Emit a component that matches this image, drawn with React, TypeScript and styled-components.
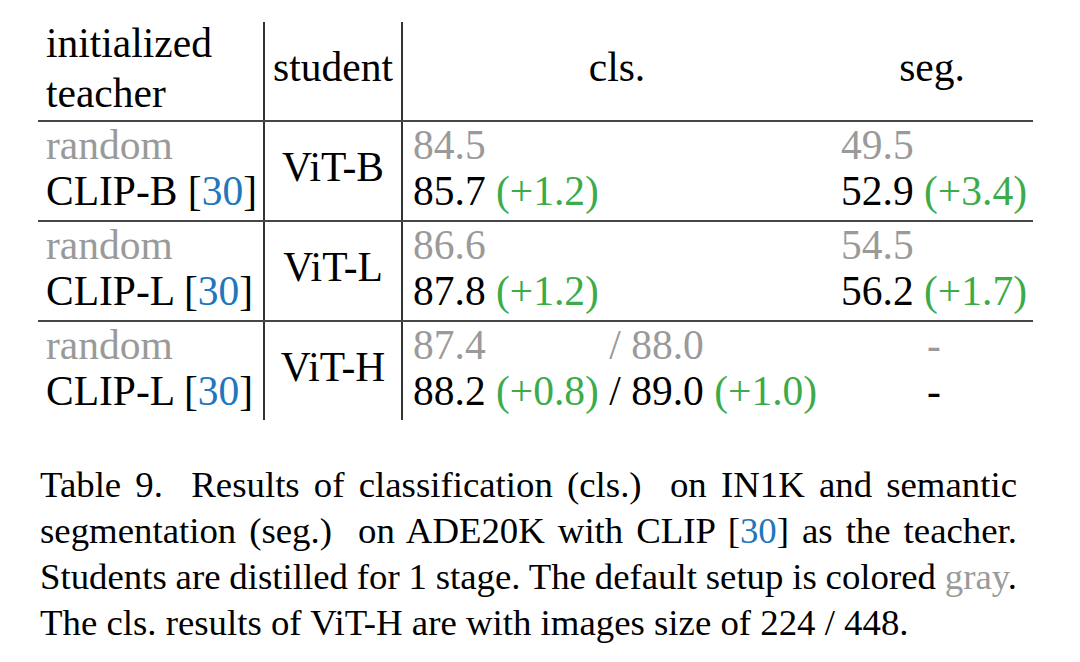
import React from "react";
import styled, { createGlobalStyle } from "styled-components";

const GlobalStyle = createGlobalStyle`
  html, body {
    margin: 0;
    padding: 0;
    background: #ffffff;
  }
  body {
    font-family: "Liberation Serif", "Times New Roman", serif;
    color: #000;
  }
`;

type Group = {
  student: string;
  teacher: string;
  clsBase: React.ReactNode;
  cls: React.ReactNode;
  segBase: React.ReactNode;
  seg: React.ReactNode;
};

const App = () => {
  const groups: Group[] = [
    {
      student: "ViT-B",
      teacher: "CLIP-B",
      clsBase: <Gray>84.5</Gray>,
      cls: <>85.7 <Gain>(+1.2)</Gain></>,
      segBase: <Gray>49.5<Phantom> (+3.4)</Phantom></Gray>,
      seg: <>52.9 <Gain>(+3.4)</Gain></>,
    },
    {
      student: "ViT-L",
      teacher: "CLIP-L",
      clsBase: <Gray>86.6</Gray>,
      cls: <>87.8 <Gain>(+1.2)</Gain></>,
      segBase: <Gray>54.5<Phantom> (+1.7)</Phantom></Gray>,
      seg: <>56.2 <Gain>(+1.7)</Gain></>,
    },
    {
      student: "ViT-H",
      teacher: "CLIP-L",
      clsBase: <Gray>87.4<Phantom> (+0.8)</Phantom> / 88.0</Gray>,
      cls: <>88.2 <Gain>(+0.8)</Gain> / 89.0 <Gain>(+1.0)</Gain></>,
      segBase: <Gray>-</Gray>,
      seg: <>-</>,
    },
  ];

  return (
    <Page>
      <GlobalStyle />
      <Table>
        <Row $head>
          <TeacherCell $divider $head>
            <div>initialized</div>
            <div>teacher</div>
          </TeacherCell>
          <CenterCell $divider>student</CenterCell>
          <CenterCell>cls.</CenterCell>
          <CenterCell>seg.</CenterCell>
        </Row>
        {groups.map((g, i) => (
          <Row key={i}>
            <TeacherCell $divider>
              <Gray>random</Gray>
              <div>{g.teacher} [<Ref>30</Ref>]</div>
            </TeacherCell>
            <CenterCell $divider>{g.student}</CenterCell>
            <ValueCell>
              <div>{g.clsBase}</div>
              <div>{g.cls}</div>
            </ValueCell>
            <ValueCell $center>
              <div>{g.segBase}</div>
              <div>{g.seg}</div>
            </ValueCell>
          </Row>
        ))}
      </Table>
      <Caption>
        <CaptionLine $justify>
          Table 9.{"\u00a0 "}Results of classification (cls.){"\u00a0 "}on IN1K and semantic
        </CaptionLine>
        <CaptionLine $justify>
          segmentation (seg.){"\u00a0 "}on ADE20K with CLIP [<Ref>30</Ref>] as the teacher.
        </CaptionLine>
        <CaptionLine $justify $tight>
          Students are distilled for 1 stage. The default setup is colored <Gray>gray</Gray>.
        </CaptionLine>
        <CaptionLine>
          The cls. results of ViT-H are with images size of 224 / 448.
        </CaptionLine>
      </Caption>
    </Page>
  );
};

const Page = styled.div`
  width: 1080px;
  height: 662px;
  padding: 22px 0 0 38px;
  box-sizing: border-box;
  overflow: hidden;
  font-family: "Liberation Serif", "Times New Roman", serif;
`;

const Table = styled.div`
  width: 995px;
  font-size: 41.5px;
`;

const Row = styled.div<{ $head?: boolean }>`
  display: grid;
  grid-template-columns: 227px 138px 428px 202px;
  height: ${(p) => (p.$head ? 98 : 100)}px;
  border-top: ${(p) => (p.$head ? "none" : "2px solid #474747")};
  box-sizing: border-box;
`;

const TeacherCell = styled.div<{ $divider?: boolean; $head?: boolean }>`
  border-right: ${(p) => (p.$divider ? "2px solid #333" : "none")};
  padding-left: 8px;
  line-height: ${(p) => (p.$head ? 50 : 46)}px;
  white-space: nowrap;
  & > div:first-child {
    margin-top: ${(p) => (p.$head ? -4 : 0)}px;
  }
`;

const CenterCell = styled.div<{ $divider?: boolean }>`
  border-right: ${(p) => (p.$divider ? "2px solid #333" : "none")};
  display: flex;
  align-items: center;
  justify-content: center;
  padding-bottom: 8px;
  line-height: 46px;
  white-space: nowrap;
`;

const ValueCell = styled.div<{ $center?: boolean }>`
  padding-left: ${(p) => (p.$center ? 4 : 10)}px;
  text-align: ${(p) => (p.$center ? "center" : "left")};
  line-height: 46px;
  white-space: nowrap;
`;

const Gray = styled.span`
  color: #9a9a9a;
`;

const Gain = styled.span`
  color: #3cab4a;
`;

const Ref = styled.span`
  color: #2176bd;
`;

const Phantom = styled.span`
  visibility: hidden;
`;

const Caption = styled.div`
  width: 977px;
  margin: 42px 0 0 2px;
  font-size: 36.8px;
  line-height: 46px;
`;

const CaptionLine = styled.div<{ $justify?: boolean; $tight?: boolean }>`
  text-align: ${(p) => (p.$justify ? "justify" : "left")};
  text-align-last: ${(p) => (p.$justify ? "justify" : "left")};
  word-spacing: ${(p) => (p.$tight ? -2 : 0)}px;
`;

export default App;
